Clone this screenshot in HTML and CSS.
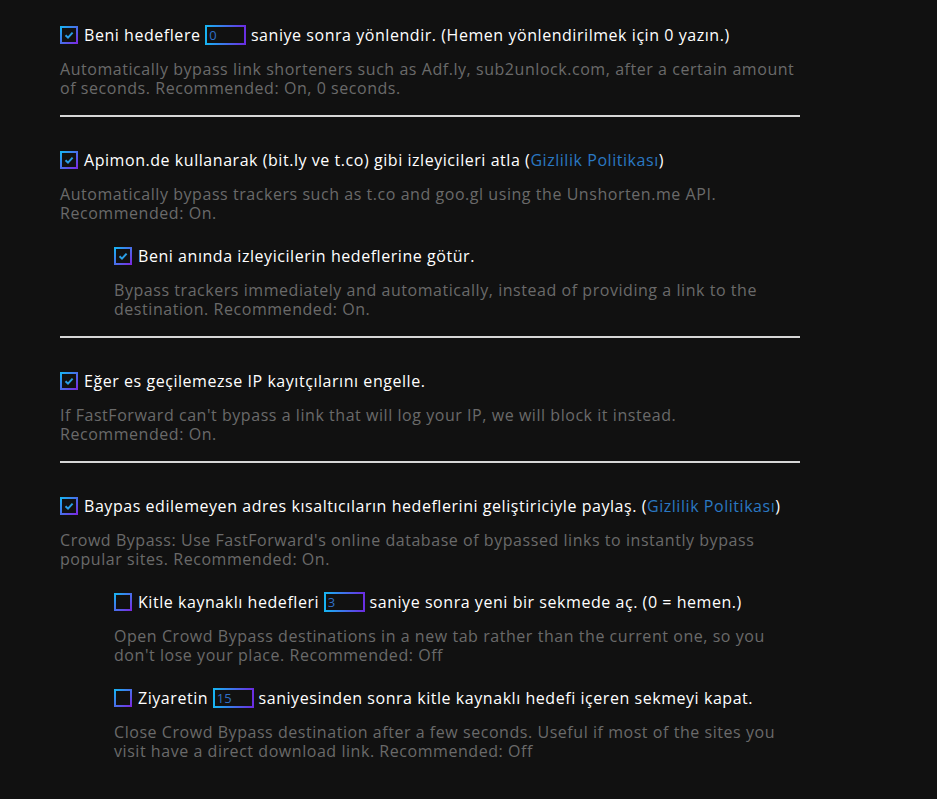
FILE: index.html
```html
<!DOCTYPE html>
<html lang="tr">
<head>
    <meta charset="UTF-8">
    <title>FastForward Ayarlar</title>
    <link rel="stylesheet" href="styles.css">
</head>
<body>
<main class="options">
    <section class="option">
        <label class="option-title"><span class="check on"><svg viewBox="0 0 14 14" width="14" height="14"><path d="M3.5 7.2 L6 9.6 L10.6 4.6" fill="none" stroke="#2a9ee6" stroke-width="2"/></svg></span>Beni hedeflere <input class="secs" type="text" value="0"> saniye sonra yönlendir. (Hemen yönlendirilmek için 0 yazın.)</label>
        <p class="option-desc">Automatically bypass link shorteners such as Adf.ly, sub2unlock.com, after a certain amount of seconds. Recommended: On, 0 seconds.</p>
    </section>
    <hr>
    <section class="option">
        <label class="option-title"><span class="check on"><svg viewBox="0 0 14 14" width="14" height="14"><path d="M3.5 7.2 L6 9.6 L10.6 4.6" fill="none" stroke="#2a9ee6" stroke-width="2"/></svg></span>Apimon.de kullanarak (bit.ly ve t.co) gibi izleyicileri atla (<a href="#">Gizlilik Politikası</a>)</label>
        <p class="option-desc">Automatically bypass trackers such as t.co and goo.gl using the Unshorten.me API. Recommended: On.</p>
        <section class="option sub">
            <label class="option-title"><span class="check on"><svg viewBox="0 0 14 14" width="14" height="14"><path d="M3.5 7.2 L6 9.6 L10.6 4.6" fill="none" stroke="#2a9ee6" stroke-width="2"/></svg></span>Beni anında izleyicilerin hedeflerine götür.</label>
            <p class="option-desc">Bypass trackers immediately and automatically, instead of providing a link to the destination. Recommended: On.</p>
        </section>
    </section>
    <hr>
    <section class="option">
        <label class="option-title"><span class="check on"><svg viewBox="0 0 14 14" width="14" height="14"><path d="M3.5 7.2 L6 9.6 L10.6 4.6" fill="none" stroke="#2a9ee6" stroke-width="2"/></svg></span>Eğer es geçilemezse IP kayıtçılarını engelle.</label>
        <p class="option-desc">If FastForward can't bypass a link that will log your IP, we will block it instead. Recommended: On.</p>
    </section>
    <hr>
    <section class="option">
        <label class="option-title"><span class="check on"><svg viewBox="0 0 14 14" width="14" height="14"><path d="M3.5 7.2 L6 9.6 L10.6 4.6" fill="none" stroke="#2a9ee6" stroke-width="2"/></svg></span>Baypas edilemeyen adres kısaltıcıların hedeflerini geliştiriciyle paylaş. (<a href="#">Gizlilik Politikası</a>)</label>
        <p class="option-desc">Crowd Bypass: Use FastForward's online database of bypassed links to instantly bypass popular sites. Recommended: On.</p>
        <section class="option sub">
            <label class="option-title"><span class="check"></span>Kitle kaynaklı hedefleri <input class="secs" type="text" value="3"> saniye sonra yeni bir sekmede aç. (0 = hemen.)</label>
            <p class="option-desc">Open Crowd Bypass destinations in a new tab rather than the current one, so you don't lose your place. Recommended: Off</p>
        </section>
        <section class="option sub">
            <label class="option-title"><span class="check"></span>Ziyaretin <input class="secs" type="text" value="15"> saniyesinden sonra kitle kaynaklı hedefi içeren sekmeyi kapat.</label>
            <p class="option-desc">Close Crowd Bypass destination after a few seconds. Useful if most of the sites you visit have a direct download link. Recommended: Off</p>
        </section>
    </section>
</main>
</body>
</html>
```

FILE: styles.css
```css
* {
    padding: 0;
    margin: 0;
    box-sizing: border-box;
}
body {
    background: #111111;
    color: #ffffff;
    font-family: "Open Sans", "Noto Sans", sans-serif;
    font-size: 16px;
    letter-spacing: 0.55px;
}
.options {
    width: 800px;
    padding: 25px 0 40px 60px;
}
.option-title {
    display: block;
    height: 20px;
    line-height: 20px;
    white-space: nowrap;
}
.option-title a {
    color: #2a78c2;
    text-decoration: none;
}
.option-desc {
    margin-top: 15px;
    line-height: 19px;
    color: #6a6a6a;
}
.option.sub {
    margin-top: 23px;
    padding-left: 54px;
}
.check {
    display: inline-flex;
    align-items: center;
    justify-content: center;
    width: 18px;
    height: 18px;
    margin: 1px 6px 0 0;
    vertical-align: top;
    border: 2px solid;
    border-image: linear-gradient(135deg, #17b4f2, #7a2ae2) 1;
}
.secs {
    width: 41px;
    height: 20px;
    padding: 0 2px;
    vertical-align: top;
    background: transparent;
    border: 2px solid;
    border-image: linear-gradient(90deg, #17b4f2, #6a2de2) 1;
    color: #2f6fc6;
    font-family: inherit;
    font-size: 13px;
    letter-spacing: 0;
    outline: none;
}
hr {
    margin: 17px 0 33px;
    border: 0;
    border-top: 2px solid #d6d6d6;
}
```
